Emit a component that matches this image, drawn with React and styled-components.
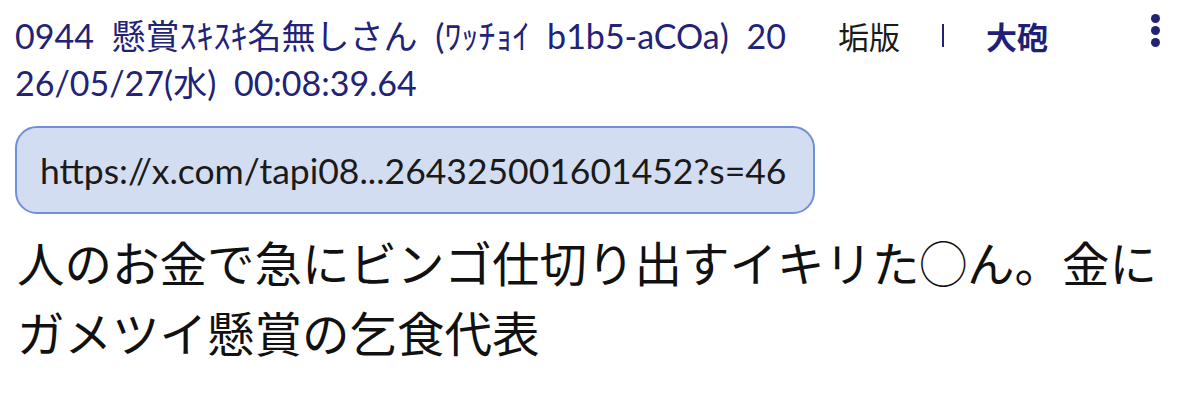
import styled, { createGlobalStyle } from 'styled-components'

const GlobalStyle = createGlobalStyle`
	html, body {
		margin: 0;
		padding: 0;
		background: #ffffff;
	}
	body {
		font-family: 'Lato', 'Noto Sans CJK JP', sans-serif;
	}
`

const Post = styled.article`
	width: 1200px;
	height: 400px;
	box-sizing: border-box;
	padding: 12px 0 0 15px;
	overflow: hidden;
`

const Header = styled.header`
	display: flex;
	align-items: flex-start;
`

const Meta = styled.div`
	width: 785px;
	flex-shrink: 0;
	color: #222277;
	font-size: 34px;
	line-height: 46px;
	word-spacing: 9px;
	word-break: break-all;
`

const Name = styled.span`
	font-family: 'Noto Sans CJK JP', sans-serif;
	font-size: 34px;
`

const Actions = styled.nav`
	display: flex;
	align-items: center;
	height: 46px;
	margin-left: 38px;
	font-family: 'Noto Sans CJK JP', sans-serif;
	font-size: 31px;
`

const Action = styled.span`
	color: ${p => (p.$strong ? '#1f1f78' : '#1a1a1a')};
	font-weight: ${p => (p.$strong ? 700 : 400)};
`

const Divider = styled.span`
	width: 2px;
	height: 23px;
	margin: 0 42px;
	background: #222277;
`

const Kebab = styled.div`
	margin-left: auto;
	margin-right: 40px;
	margin-top: 2px;
	display: flex;
	flex-direction: column;
	gap: 3px;
	span {
		width: 9px;
		height: 9px;
		border-radius: 50%;
		background: #222277;
	}
`

const LinkBox = styled.a`
	display: inline-flex;
	align-items: center;
	box-sizing: border-box;
	width: 800px;
	height: 88px;
	margin-top: 20px;
	padding: 0 23px;
	border: 2px solid #6f8fd8;
	border-radius: 22px;
	background: #d3ddf2;
	color: #1a1a1a;
	font-size: 35.5px;
	text-decoration: none;
`

const Body = styled.p`
	margin: 13px 0 0 2px;
	width: 1170px;
	color: #111111;
	font-family: 'Noto Sans CJK JP', sans-serif;
	font-size: 47.5px;
	line-height: 70px;
`

const App = () => {
	return (
		<>
			<GlobalStyle />
			<Post>
				<Header>
					<Meta>
						0944 <Name>懸賞ｽｷｽｷ名無しさん</Name> (<Name>ﾜｯﾁｮｲ</Name> b1b5-aCOa) 2026/05/27(<Name>水</Name>) 00:08:39.64
					</Meta>
					<Actions>
						<Action>垢版</Action>
						<Divider />
						<Action $strong>大砲</Action>
					</Actions>
					<Kebab aria-label="menu">
						<span />
						<span />
						<span />
					</Kebab>
				</Header>
				<LinkBox href="#">https://x.com/tapi08...264325001601452?s=46</LinkBox>
				<Body>人のお金で急にビンゴ仕切り出すイキリた◯ん。金にガメツイ懸賞の乞食代表</Body>
			</Post>
		</>
	)
}

export default App
